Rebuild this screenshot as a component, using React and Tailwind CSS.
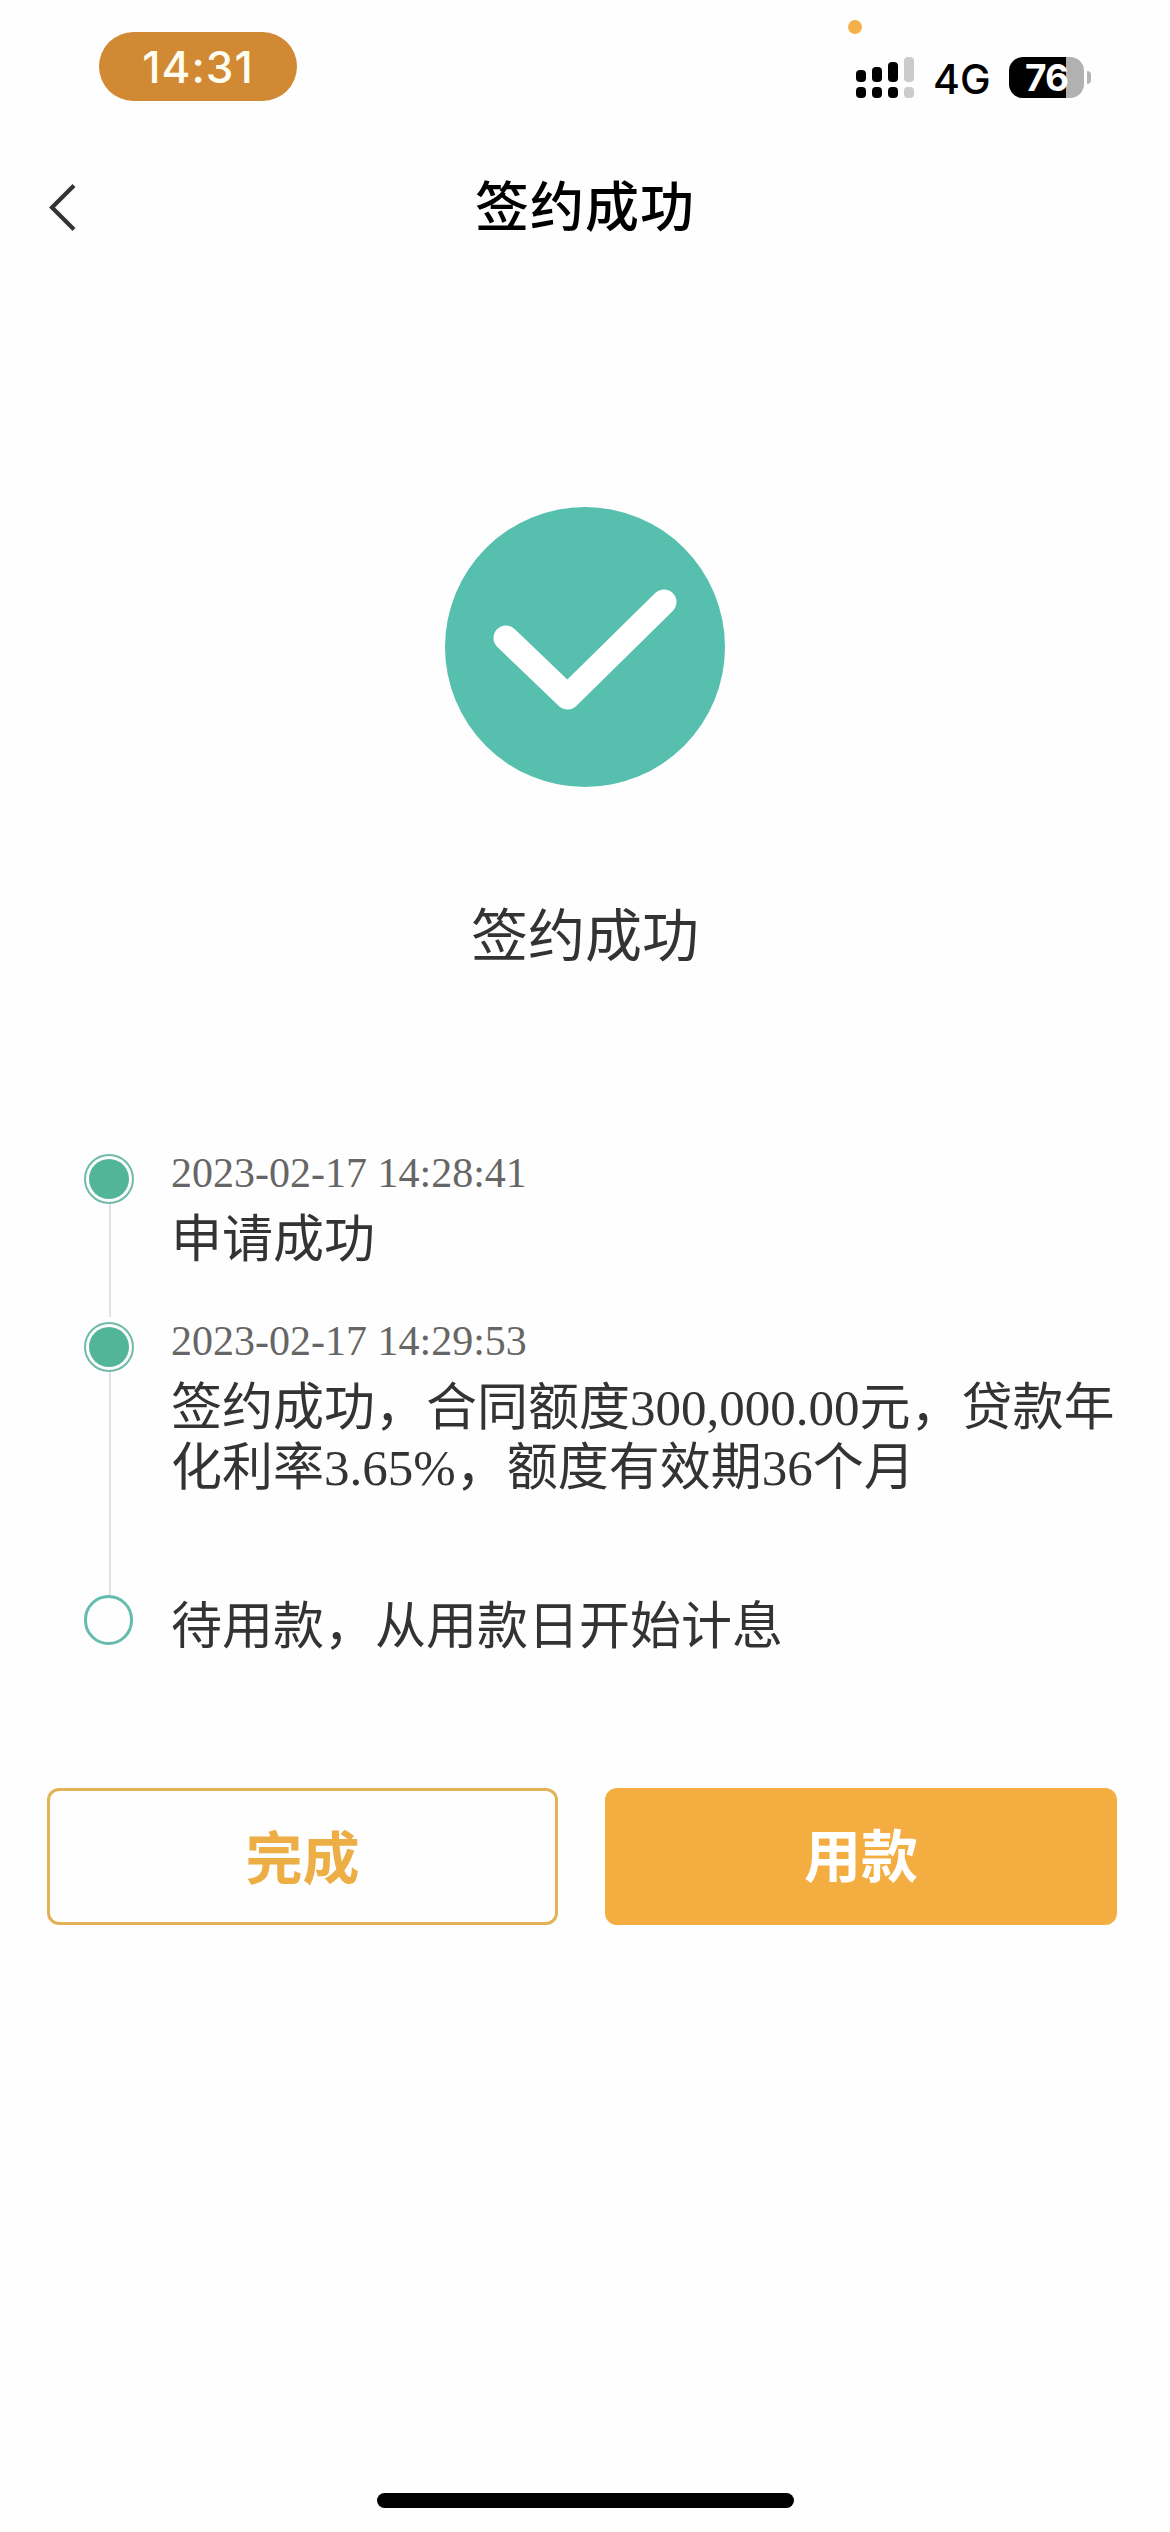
const cjk = "font-['Noto_Sans_CJK_SC',sans-serif]";

function SignalColumn({ top, color }) {
  return (
    <div className="flex flex-col gap-[5px]">
      <div className={`w-[10px] rounded-[4px] ${top} ${color}`} />
      <div className={`h-[11px] w-[10px] rounded-[4px] ${color}`} />
    </div>
  );
}

function StatusBar() {
  return (
    <header className="relative flex h-[126px] items-start justify-between pl-[99px] pr-[79px] font-['Inter',sans-serif]">
      <div className="mt-8 flex h-[69px] w-[198px] items-center justify-center rounded-full bg-[#d18a33] text-[44px] leading-none font-medium tracking-[1px] text-[#fffdf0]">
        14:31
      </div>
      <div className="absolute top-5 left-[848px] size-[14px] rounded-full bg-[#f5b04c]" />
      <div className="mt-[57px] flex h-[41px] items-end">
        <div className="flex items-end gap-[6px]">
          <SignalColumn top="h-[12px]" color="bg-black" />
          <SignalColumn top="h-[15px]" color="bg-black" />
          <SignalColumn top="h-[20px]" color="bg-black" />
          <SignalColumn top="h-[25px]" color="bg-[#cbcbcb]" />
        </div>
        <span className="ml-[19px] w-[76px] translate-y-[2px] text-[41px] leading-[41px] font-medium text-black">4G</span>
        <div className="flex h-[41px] w-[75px] items-center justify-center rounded-[14px] bg-[linear-gradient(90deg,#000_57px,#b1b1b1_57px)] text-[37px] leading-none font-bold tracking-[-1px] text-white">
          76
        </div>
        <div className="mb-[14px] ml-[3px] h-[13px] w-[4px] rounded-r-full bg-[#b5b5b5]" />
      </div>
    </header>
  );
}

function TimelineItem({ time, lines, height, done = true }) {
  return (
    <li className={`flex ${height}`}>
      <div className="flex w-[50px] flex-col items-center">
        {done ? (
          <>
            <div className="mt-[5px] flex size-[50px] shrink-0 items-center justify-center rounded-full border-2 border-[#6dbba8]">
              <div className="size-10 rounded-full bg-[#52b598]" />
            </div>
            <div className="ml-[2px] w-[2px] flex-1 bg-[#e2e2e2]" />
          </>
        ) : (
          <div className="mr-[1px] h-[50px] w-[49px] shrink-0 rounded-full border-[3px] border-[#65bcac]" />
        )}
      </div>
      <div className="ml-[37px] font-['Liberation_Serif','Noto_Sans_CJK_SC',serif] whitespace-nowrap">
        {time && <div className="mb-[13px] text-[42px] leading-[48px] text-[#666]">{time}</div>}
        {lines.map((line) => (
          <div key={line} className={`text-[51px] leading-[60px] text-[#333] ${done ? "" : "mt-[2px]"}`}>
            {line}
          </div>
        ))}
      </div>
    </li>
  );
}

export default function App() {
  return (
    <div className={`flex h-[2532px] w-[1170px] flex-col overflow-hidden bg-[#fefefe] ${cjk}`}>
      <StatusBar />
      <nav className="grid h-[162px] grid-cols-[100px_1fr_100px] items-center">
        <svg className="ml-[46px]" width="32" height="52" viewBox="0 0 32 52" fill="none" stroke="#333" strokeWidth="4.2">
          <path d="M28 4.5 6 26.5 28 48.5" />
        </svg>
        <h1 className="pb-[6px] text-center text-[54px] leading-[80px] font-medium tracking-[1px] text-black">签约成功</h1>
      </nav>

      <main className="flex flex-1 flex-col">
        <svg className="mt-[218px] ml-[444px]" width="282" height="282" viewBox="0 0 282 282" fill="none">
          <circle cx="141" cy="141" r="140" fill="#57bfad" />
          <path d="M62 132 123.5 191 220 96" stroke="#fff" strokeWidth="25" strokeLinecap="round" strokeLinejoin="round" />
        </svg>
        <p className="mt-[101px] text-center text-[57px] leading-[84px] text-[#333]">签约成功</p>

        <ol className="mt-[176px] ml-[84px]">
          <TimelineItem height="h-[168px]" time="2023-02-17 14:28:41" lines={["申请成功"]} />
          <TimelineItem
            height="h-[278px]"
            time="2023-02-17 14:29:53"
            lines={["签约成功，合同额度300,000.00元，贷款年", "化利率3.65%，额度有效期36个月"]}
          />
          <TimelineItem height="h-[61px]" done={false} lines={["待用款，从用款日开始计息"]} />
        </ol>

        <div className="mt-[132px] flex gap-[47px] pl-[47px] text-[57px] leading-[84px]">
          <button className="flex h-[137px] w-[511px] items-center justify-center rounded-[12px] border-[3px] border-[#e3b257] pb-[6px] font-bold text-[#edae45]">
            完成
          </button>
          <button className="flex h-[137px] w-[512px] items-center justify-center rounded-[12px] bg-[#f4ad40] pb-[10px] font-bold text-white">
            用款
          </button>
        </div>
      </main>

      <div className="mb-6 h-[15px] w-[417px] self-center rounded-full bg-black" />
    </div>
  );
}
